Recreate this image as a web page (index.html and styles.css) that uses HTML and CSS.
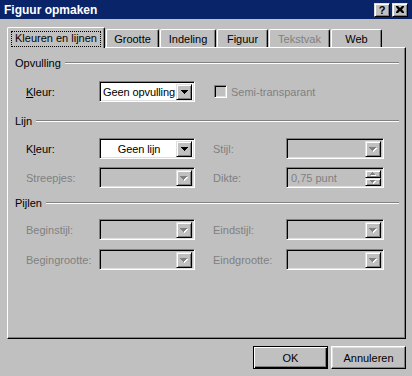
FILE: index.html
```html
<!DOCTYPE html>
<html lang="nl">
<head>
<meta charset="utf-8">
<title>Figuur opmaken</title>
<link rel="stylesheet" href="styles.css">
</head>
<body>
<div class="window">
  <div class="titlebar">
    <span class="title">Figuur opmaken</span>
    <div class="caption-btns">
      <div class="cap-btn help">?</div>
      <div class="cap-btn close">
        <svg width="8" height="7" viewBox="0 0 8 7"><path d="M0 0h2l2 2 2-2h2v1l-2 2.5 2 2.5v1h-2l-2-2-2 2h-2v-1l2-2.5-2-2.5z" fill="#000"/></svg>
      </div>
    </div>
  </div>

  <div class="tabctl">
    <div class="tabs">
      <div class="tab selected t-kleuren"><span class="focus">Kleuren en lijnen</span></div>
      <div class="tab t-grootte">Grootte</div>
      <div class="tab t-indeling">Indeling</div>
      <div class="tab t-figuur">Figuur</div>
      <div class="tab t-tekstvak disabled">Tekstvak</div>
      <div class="tab t-web">Web</div>
    </div>
    <div class="panel">
      <div class="group-head g-opvulling"><span>Opvulling</span><i class="etch"></i></div>
      <div class="row r1">
        <span class="lbl"><u>K</u>leur:</span>
        <div class="combo enabled"><span class="combo-text">Geen opvulling</span><span class="drop"><svg width="7" height="4" viewBox="0 0 7 4"><path d="M0 0h7v1h-1v1h-1v1h-1v1h-1v-1h-1v-1h-1v-1h-1z" fill="#000"/></svg></span></div>
        <div class="check-wrap"><span class="checkbox"></span><span class="dis">Semi-transparant</span></div>
      </div>

      <div class="group-head g-lijn"><span>Lijn</span><i class="etch"></i></div>
      <div class="row r2">
        <span class="lbl">K<u>l</u>eur:</span>
        <div class="combo enabled"><span class="combo-text">Geen lijn</span><span class="drop"><svg width="7" height="4" viewBox="0 0 7 4"><path d="M0 0h7v1h-1v1h-1v1h-1v1h-1v-1h-1v-1h-1v-1h-1z" fill="#000"/></svg></span></div>
        <span class="lbl dis col4">Stijl:</span>
        <div class="combo"><span class="combo-text"></span><span class="drop"><svg width="8" height="5" viewBox="0 0 8 5"><path d="M1 1h7v1h-1v1h-1v1h-1v1h-1v-1h-1v-1h-1v-1h-1z" fill="#fff"/><path d="M0 0h7v1h-1v1h-1v1h-1v1h-1v-1h-1v-1h-1v-1h-1z" fill="#808080"/></svg></span></div>
      </div>
      <div class="row r3">
        <span class="lbl dis">Streepjes:</span>
        <div class="combo"><span class="combo-text"></span><span class="drop"><svg width="8" height="5" viewBox="0 0 8 5"><path d="M1 1h7v1h-1v1h-1v1h-1v1h-1v-1h-1v-1h-1v-1h-1z" fill="#fff"/><path d="M0 0h7v1h-1v1h-1v1h-1v1h-1v-1h-1v-1h-1v-1h-1z" fill="#808080"/></svg></span></div>
        <span class="lbl dis col4">Dikte:</span>
        <div class="combo spin"><span class="spin-text dis">0,75 punt</span>
          <span class="spin-btns">
            <span class="spin-btn"><svg width="6" height="4" viewBox="0 0 6 4"><path d="M3 1h1v1h1v1h1v1h-5v-1h1v-1h1z" fill="#fff"/><path d="M2 0h1v1h1v1h1v1h-5v-1h1v-1h1z" fill="#808080"/></svg></span>
            <span class="spin-btn"><svg width="6" height="4" viewBox="0 0 6 4"><path d="M1 1h5v1h-1v1h-1v1h-1v-1h-1v-1h-1z" fill="#fff"/><path d="M0 0h5v1h-1v1h-1v1h-1v-1h-1v-1h-1z" fill="#808080"/></svg></span>
          </span>
        </div>
      </div>

      <div class="group-head g-pijlen"><span>Pijlen</span><i class="etch"></i></div>
      <div class="row r4">
        <span class="lbl dis">Beginstijl:</span>
        <div class="combo"><span class="combo-text"></span><span class="drop"><svg width="8" height="5" viewBox="0 0 8 5"><path d="M1 1h7v1h-1v1h-1v1h-1v1h-1v-1h-1v-1h-1v-1h-1z" fill="#fff"/><path d="M0 0h7v1h-1v1h-1v1h-1v1h-1v-1h-1v-1h-1v-1h-1z" fill="#808080"/></svg></span></div>
        <span class="lbl dis col4">Eindstijl:</span>
        <div class="combo"><span class="combo-text"></span><span class="drop"><svg width="8" height="5" viewBox="0 0 8 5"><path d="M1 1h7v1h-1v1h-1v1h-1v1h-1v-1h-1v-1h-1v-1h-1z" fill="#fff"/><path d="M0 0h7v1h-1v1h-1v1h-1v1h-1v-1h-1v-1h-1v-1h-1z" fill="#808080"/></svg></span></div>
      </div>
      <div class="row r5">
        <span class="lbl dis">Begingrootte:</span>
        <div class="combo"><span class="combo-text"></span><span class="drop"><svg width="8" height="5" viewBox="0 0 8 5"><path d="M1 1h7v1h-1v1h-1v1h-1v1h-1v-1h-1v-1h-1v-1h-1z" fill="#fff"/><path d="M0 0h7v1h-1v1h-1v1h-1v1h-1v-1h-1v-1h-1v-1h-1z" fill="#808080"/></svg></span></div>
        <span class="lbl dis col4">Eindgrootte:</span>
        <div class="combo"><span class="combo-text"></span><span class="drop"><svg width="8" height="5" viewBox="0 0 8 5"><path d="M1 1h7v1h-1v1h-1v1h-1v1h-1v-1h-1v-1h-1v-1h-1z" fill="#fff"/><path d="M0 0h7v1h-1v1h-1v1h-1v1h-1v-1h-1v-1h-1v-1h-1z" fill="#808080"/></svg></span></div>
      </div>
    </div>
  </div>

  <div class="buttons">
    <div class="btn default">OK</div>
    <div class="btn">Annuleren</div>
  </div>
</div>
</body>
</html>
```

FILE: styles.css
```css
* { box-sizing: border-box; }
html, body { margin: 0; padding: 0; }
body {
  width: 412px;
  height: 376px;
  overflow: hidden;
  background: #c0c0c0;
  font-family: "Liberation Sans", Arial, sans-serif;
  font-size: 11px;
  color: #000;
}
.window { width: 412px; height: 376px; }

/* title bar */
.titlebar {
  height: 19px;
  background: #0a246a;
  display: flex;
  align-items: center;
  padding: 0 4px 0 4px;
}
.title { color: #fff; font-weight: bold; font-size: 12px; }
.caption-btns { margin-left: auto; display: flex; gap: 2px; }
.cap-btn {
  width: 16px;
  height: 14px;
  background: #c0c0c0;
  border-top: 1px solid #dfdfdf;
  border-left: 1px solid #dfdfdf;
  border-right: 1px solid #000;
  border-bottom: 1px solid #000;
  box-shadow: inset 1px 1px #fff, inset -1px -1px #808080;
  display: flex;
  align-items: center;
  justify-content: center;
}
.help { font-weight: bold; font-size: 11px; line-height: 1; padding-top: 1px; }

/* tab control */
.tabctl { margin: 8px 0 0 7px; width: 399px; }
.tabs {
  display: flex;
  align-items: flex-end;
  height: 20px;
}
.tab {
  height: 18px;
  margin-left: 1px;
  border-left: 1px solid #fff;
  border-top: 1px solid #fff;
  border-right: 1px solid #000;
  box-shadow: inset -1px 0 #808080;
  border-radius: 2px 2px 0 0;
  text-align: center;
  padding-top: 3px;
  line-height: 13px;
  white-space: nowrap;
}
.tab.selected {
  height: 21px;
  margin-left: 0;
  margin-bottom: -1px;
  position: relative;
  z-index: 1;
  background: #c0c0c0;
  padding-top: 4px;
}
.t-kleuren { width: 98px; }
.t-grootte { width: 53px; margin-left: 1px; }
.t-indeling { width: 56px; }
.t-figuur { width: 51px; }
.t-tekstvak { width: 61px; }
.t-web { width: 51px; }
.tab.disabled { color: #808080; }
.focus {
  display: inline-block;
  outline: 1px dotted #000;
  padding: 0 3px 1px 3px;
  line-height: 13px;
}

.panel {
  height: 292px;
  border-top: 1px solid #fff;
  border-left: 1px solid #fff;
  border-right: 1px solid #000;
  border-bottom: 1px solid #000;
  box-shadow: inset -1px -1px #808080;
  padding: 8px 6px 0 0;
}

.group-head {
  display: flex;
  align-items: center;
  height: 13px;
  padding-left: 7px;
}
.etch {
  flex: 1;
  margin-left: 4px;
  height: 2px;
  border-top: 1px solid #808080;
  border-bottom: 1px solid #fff;
}
.g-lijn { margin-top: 12px; }
.g-pijlen { margin-top: 8px; }

.row {
  display: grid;
  grid-template-columns: 73px 96px 18px 73px 98px;
  height: 21px;
  align-items: center;
  padding-left: 18px;
}
.r1 { margin-top: 12px; }
.r2 { margin-top: 11px; }
.r3 { margin-top: 8px; }
.r4 { margin-top: 10px; }
.r5 { margin-top: 9px; }
.col4 { grid-column: 4; }
.lbl { white-space: nowrap; }
.dis { color: #808080; }

.combo {
  height: 21px;
  display: flex;
  border-top: 1px solid #808080;
  border-left: 1px solid #808080;
  border-right: 1px solid #fff;
  border-bottom: 1px solid #fff;
  box-shadow: inset 1px 1px #000, inset -1px -1px #dfdfdf;
  padding: 2px 2px 1px 2px;
  background: #c0c0c0;
}
.combo.enabled { background: #fff; }
.combo-text {
  flex: 1;
  text-align: center;
  line-height: 16px;
  white-space: nowrap;
  overflow: hidden;
  letter-spacing: -0.1px;
}
.drop {
  width: 16px;
  height: 16px;
  background: #c0c0c0;
  border-top: 1px solid #dfdfdf;
  border-left: 1px solid #dfdfdf;
  border-right: 1px solid #000;
  border-bottom: 1px solid #000;
  box-shadow: inset 1px 1px #fff, inset -1px -1px #808080;
  display: flex;
  align-items: center;
  justify-content: center;
}
.drop svg { display: block; }

.spin-text {
  flex: 1;
  line-height: 16px;
  padding-left: 2px;
  white-space: nowrap;
}
.spin-btns { width: 16px; display: flex; flex-direction: column; }
.spin-btn {
  height: 8px;
  background: #c0c0c0;
  border-top: 1px solid #dfdfdf;
  border-left: 1px solid #dfdfdf;
  border-right: 1px solid #000;
  border-bottom: 1px solid #000;
  box-shadow: inset 1px 1px #fff, inset -1px -1px #808080;
  display: flex;
  align-items: center;
  justify-content: center;
}
.spin-btn svg { display: block; }

.check-wrap {
  grid-column: 4 / 6;
  display: flex;
  align-items: center;
  gap: 4px;
  padding-left: 1px;
}
.checkbox {
  width: 13px;
  height: 13px;
  border-top: 1px solid #808080;
  border-left: 1px solid #808080;
  border-right: 1px solid #fff;
  border-bottom: 1px solid #fff;
  box-shadow: inset 1px 1px #000, inset -1px -1px #dfdfdf;
  background: #c0c0c0;
}

/* dialog buttons */
.buttons {
  display: flex;
  justify-content: flex-end;
  gap: 3px;
  margin-top: 7px;
  padding-right: 6px;
}
.btn {
  width: 75px;
  height: 23px;
  display: flex;
  align-items: center;
  justify-content: center;
  border-top: 1px solid #fff;
  border-left: 1px solid #fff;
  border-right: 1px solid #000;
  border-bottom: 1px solid #000;
  box-shadow: inset -1px -1px #808080, inset 1px 1px #dfdfdf;
}
.btn.default {
  border: 1px solid #000;
  box-shadow: inset 1px 1px #fff, inset -1px -1px #000, inset -2px -2px #808080;
}
```
